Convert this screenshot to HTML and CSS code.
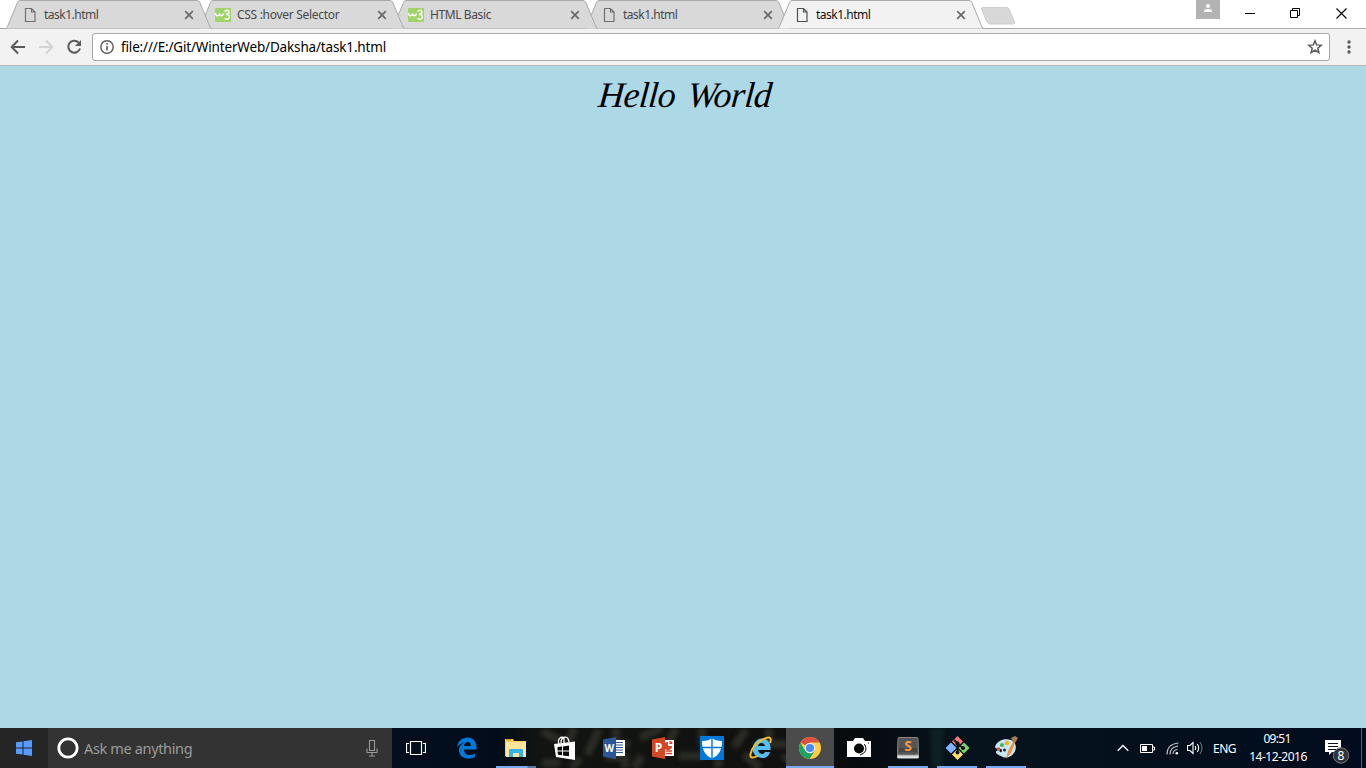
FILE: index.html
```html
<!DOCTYPE html>
<html lang="en">
<head>
<meta charset="utf-8">
<title>task1.html</title>
<link rel="stylesheet" href="styles.css">
</head>
<body>
<svg class="defs" width="0" height="0">
  <symbol id="tab" viewBox="0 0 206 29"><path d="M0 28.5 Q1 28 1.500 26.500 L11.500 2.500 Q12.300 .5 14 .5 H191 Q193 .5 193.800 2.500 L204 27 Q204.700 28.5 206 28.5"/></symbol>
  <symbol id="file" viewBox="0 0 16 16"><path d="M3.500 1.500h6l3.500 3.500v9.500h-9.500zM9.500 1.500v3.500h3.500" fill="none" stroke="currentColor" stroke-width="1.200"/></symbol>
  <symbol id="close" viewBox="0 0 10 10"><path d="M1.200 1.200l7.600 7.600M8.800 1.200l-7.600 7.600" fill="none" stroke="#696969" stroke-width="1.700"/></symbol>
  <symbol id="w3" viewBox="0 0 16 16"><rect y="1" width="16" height="14" rx="1" fill="#a0d468"/><path d="M.5 6Q.8 9 2.500 8.800T4.800 6.500Q5 9 6.500 8.800T8.500 6.500M9.500 4.500Q13.500 1.800 14 5Q14 7 11 7.200Q14.800 7.500 14.200 10.500Q13 13.500 9.500 11.500" fill="none" stroke="#fff" stroke-width="1.400"/></symbol>
</svg>
<div class="window">
  <header class="tabstrip">
    <div class="tab t1"><svg class="shape"><use href="#tab"/></svg><svg class="fav"><use href="#file"/></svg><span class="title w-task">task1.html</span><svg class="x"><use href="#close"/></svg></div>
    <div class="tab t2"><svg class="shape"><use href="#tab"/></svg><svg class="fav"><use href="#w3"/></svg><span class="title w-css">CSS :hover Selector</span><svg class="x"><use href="#close"/></svg></div>
    <div class="tab t3"><svg class="shape"><use href="#tab"/></svg><svg class="fav"><use href="#w3"/></svg><span class="title w-basic">HTML Basic</span><svg class="x"><use href="#close"/></svg></div>
    <div class="tab t4"><svg class="shape"><use href="#tab"/></svg><svg class="fav"><use href="#file"/></svg><span class="title w-task">task1.html</span><svg class="x"><use href="#close"/></svg></div>
    <div class="tab active"><svg class="shape"><use href="#tab"/></svg><svg class="fav"><use href="#file"/></svg><span class="title w-task">task1.html</span><svg class="x"><use href="#close"/></svg></div>
    <svg class="newtab" width="36" height="20" viewBox="0 0 36 20"><path d="M1.500 2.500Q1 .5 3 .5H27Q28.500 .5 29 2L34.500 15Q35 17 33 17H10Q8 17 7 15z" fill="#d8d8d8" stroke="#cdcdcd"/></svg>
    <div class="controls">
      <svg class="user" width="24" height="19"><rect width="24" height="19" fill="#b3b3b3"/><circle cx="12" cy="6" r="2.100" fill="#fff"/><path d="M8 12V10.500Q8.500 9 12 9t4 1.500V12z" fill="#fff"/></svg>
      <svg width="10" height="10"><path d="M0 5.500h10" stroke="#000"/></svg>
      <svg width="11" height="11"><path d="M.5 2.500h7v7h-7zM2.500 2.500v-2h7v7h-2" fill="none" stroke="#000"/></svg>
      <svg width="11" height="11"><path d="M.5 .5l10 10M10.500 .5l-10 10" stroke="#000" stroke-width="1.100"/></svg>
    </div>
  </header>
  <div class="toolbar">
    <svg class="nav" width="16" height="16"><path d="M15 8H2M8 1.500L1.700 8L8 14.500" fill="none" stroke="#5a5a5a" stroke-width="2"/></svg>
    <svg class="nav" width="16" height="16"><path d="M1 8H14M8 1.500L14.300 8L8 14.500" fill="none" stroke="#d3d3d3" stroke-width="2"/></svg>
    <svg class="nav" width="16" height="16"><path d="M12.600 3.500A6 6 0 1 0 14 9.500" fill="none" stroke="#5a5a5a" stroke-width="2"/><path d="M15 1v6H9z" fill="#5a5a5a"/></svg>
    <div class="omnibox">
      <svg width="14" height="14"><circle cx="7" cy="7" r="6.200" fill="none" stroke="#5a5a5a" stroke-width="1.400"/><path d="M7 6v4.500M7 3v1.700" stroke="#5a5a5a" stroke-width="1.600"/></svg>
      <span class="url">file:///E:/Git/WinterWeb/Daksha/task1.html</span>
      <svg class="star" width="16" height="16"><path d="M8 1.800L9.700 5.900L14.200 6.300L10.800 9.200L11.900 13.600L8 11.200L4.100 13.600L5.200 9.200L1.800 6.300L6.300 5.900z" fill="none" stroke="#5a5a5a" stroke-width="1.500"/></svg>
    </div>
    <svg class="menu" width="4" height="14"><g fill="#5a5a5a"><circle cx="2" cy="2" r="1.700"/><circle cx="2" cy="7" r="1.700"/><circle cx="2" cy="12" r="1.700"/></g></svg>
  </div>
  <main class="page"><h1 class="hello">Hello World</h1></main>
  <footer class="taskbar">
    <svg class="wallpaper" width="974" height="40"><defs><linearGradient id="wg"><stop offset="0" stop-color="#030e20"/><stop offset=".11" stop-color="#030d1a"/><stop offset=".15" stop-color="#111411"/><stop offset=".4" stop-color="#111210"/><stop offset=".48" stop-color="#050a0e"/><stop offset=".58" stop-color="#07131c"/><stop offset="1" stop-color="#020c1e"/></linearGradient><filter id="soft"><feGaussianBlur stdDeviation="2"/></filter></defs><rect width="974" height="40" fill="url(#wg)"/><g filter="url(#soft)" fill="none" stroke="#46443a" stroke-width="8" opacity=".5"><path d="M150 3l18 10M182 0l-8 20M207 2l-12 25M224 0v16h14M248 10l22-10M284 0l-9 17M310 0v14h20M354 2l-12 17M377 0v16h18M150 35h18M188 30l-8 10M213 29h20v11M250 28l-8 12M287 28h25M326 30v10M352 26l16 14M390 30h17"/></g><path d="M538 0h14l-2 40h-10z" fill="#18302c" filter="url(#soft)" opacity=".5"/></svg>
    <div class="start"><svg width="16" height="16"><path d="M0 2.300L6.500 1.400V7.400H0zM7.500 1.200L16 0V7.400H7.500zM0 8.400H6.500V14.600L0 13.700zM7.500 8.400H16V16L7.500 14.800z" fill="#569cff"/></svg></div>
    <div class="search">
      <svg width="22" height="22"><circle cx="11" cy="11" r="9.200" fill="none" stroke="#fff" stroke-width="2.800"/></svg>
      <span class="ask">Ask me anything</span>
      <svg class="mic" width="12" height="17"><path d="M3.500 .5h5v10h-5zM1 8.500v4h10v-4M6 12.500v3.500M3 16h6" fill="none" stroke="#999" stroke-width="1.100"/></svg>
    </div>
    <nav class="apps">
      <div class="app view"><svg width="20" height="14"><path d="M4.500 .5h11v13h-11zM3 2.500H.5v9H3M17 2.500h2.500v9H17" fill="none" stroke="#fff" stroke-width="1.200"/></svg></div>
      <div class="app"><svg width="22" height="22" viewBox="0 0 22 22"><path d="M1 10C2 4 6 .5 11.500.5C17 .5 20.500 4.500 20.500 9.500V12.500H8C8 19 15 19 19 16.500V20C13 23 3 22 3 13C3 9 6 6.500 9 5.500C6 6 3 7.500 1 10zM8 9H15C15 3.500 8.500 4 8 9z" fill="#0078d7" fill-rule="evenodd"/></svg></div>
      <div class="app explorer"><svg width="22" height="20" viewBox="0 0 22 20"><path d="M0 1H8L9 3H21V18H0z" fill="#f8cf59"/><path d="M1 4H21V19H1z" fill="#ffe69a"/><path d="M1 1h5v1.500H1z" fill="#d99c28"/><path d="M4 19V12Q4 11 5 11H17Q18 11 18 12V19H14V15H8V19z" fill="#35b4e9"/></svg></div>
      <div class="app"><svg width="22" height="24" viewBox="0 0 22 24"><path d="M0 8L21 5.500V24L2 21z" fill="#fff"/><path d="M5 8C3 3 7 0 10 2L10 7M7 7C7 0 14-1 15 6" fill="none" stroke="#fff" stroke-width="1.300"/><path d="M3.500 11L8 10.500V14.500H3.500zM9 10.400L15 9.500V14.500H9zM3.500 15.500H8V19.300L4 18.800zM9 15.500H15V20.300L9 19.500z" fill="#080b0a"/></svg></div>
      <div class="app"><svg width="22" height="22" viewBox="0 0 22 22"><path d="M11 3H22V19H11z" fill="#fff"/><path d="M13 5.500h7M13 8h7M13 10.500h7M13 13h7M13 15.500h7" stroke="#2b579a"/><path d="M0 2.500L13 0V22L0 19.500z" fill="#2b579a"/><text x="6.300" y="15" text-anchor="middle" class="office word">W</text></svg></div>
      <div class="app"><svg width="22" height="22" viewBox="0 0 22 22"><path d="M11 3H22V19H11z" fill="#fff"/><path d="M14 14h6M14 16.500h6" stroke="#d24726" stroke-width="1.300"/><path d="M16 5a4 4 0 1 0 4 4h-4z" fill="#d24726"/><path d="M17.500 4q3 0 3 3h-3z" fill="#d24726"/><path d="M0 2.500L13 0V22L0 19.500z" fill="#d24726"/><text x="6.500" y="15.300" text-anchor="middle" class="office">P</text></svg></div>
      <div class="app"><svg width="24" height="24"><rect width="24" height="24" fill="#0078d7"/><path d="M12 2Q15 5 22 5Q22.500 18 12 22.500Q1.500 18 2 5Q9 5 12 2z" fill="#fff"/><path d="M12 2v21M2 11.500h20" stroke="#0078d7" stroke-width="1.400"/></svg></div>
      <div class="app"><svg width="24" height="24" viewBox="0 0 24 24"><path d="M13 2.500C19 2.500 22 7 21.500 14H9C10 19 15 19 16 16H21C19 22.500 14 23 9 21C4 19 3 14 4 10C6 5 9 2.500 13 2.500zM9 10H16C15 6 10 6 9 10z" fill="#54bdf1" fill-rule="evenodd"/><path d="M21 7C23 2 21 0 15 3C8 6 3 12 1.500 18C.5 23 5 22 9 19.500" fill="none" stroke="#f2bd29" stroke-width="2"/></svg></div>
      <div class="app chrome"><svg width="22" height="22" viewBox="0 0 22 22"><circle cx="11" cy="11" r="11" fill="#ffcd42"/><path d="M11 11L1.500 5.500A11 11 0 0 1 20.500 5.500H11z" fill="#dd5144"/><path d="M1.500 5.500A11 11 0 0 0 10.500 22L15.800 13.700L6.200 13.700z" fill="#1ca261"/><circle cx="11" cy="11" r="5.300" fill="#f4f4f4"/><circle cx="11" cy="11" r="4.100" fill="#4c8bf5"/></svg></div>
      <div class="app"><svg width="24" height="20"><path d="M0 3H6L8 0H16L18 3H24V19H0z" fill="#fff"/><circle cx="12" cy="10.500" r="5" fill="#050808"/><path d="M17.500 6Q22 14 13 17" fill="none" stroke="#050808"/><path d="M21 5h1" stroke="#050808"/></svg></div>
      <div class="app open"><svg width="22" height="22"><path d="M1 15L0 20Q0 21.500 2 21.500H20Q22 21.500 22 20L21 15z" fill="#ddd"/><path d="M2 .5H20Q21 .5 21 2.500L21.500 15.500Q21.500 18 20 18H2Q.5 18 .5 15.500L1 2.500Q1 .5 2 .5z" fill="#555" stroke="#888"/><path d="M2 11h18v4H2z" fill="#454545"/><text x="11" y="13.500" text-anchor="middle" class="sublime">S</text></svg></div>
      <div class="app open"><svg width="25" height="25" viewBox="0 0 25 25"><path d="M12.500 0L18 5.500L12.500 11L7 5.500z" fill="#f37878"/><path d="M6 6.500L11.500 12L6 17.500L.5 12z" fill="#80b3ff"/><path d="M19 6.500L24.500 12L19 17.500L13.500 12z" fill="#80d36b"/><path d="M12.500 13L18 18.500L12.500 24L7 18.500z" fill="#ffe069"/><path d="M9 4L12.500 7V17M12.500 8L18 12" fill="none" stroke="#111" stroke-width="2"/><g fill="#111"><circle cx="12.500" cy="7.500" r="2"/><circle cx="18" cy="12" r="2"/><circle cx="12.500" cy="16.500" r="2"/></g></svg></div>
      <div class="app open"><svg width="25" height="24" viewBox="0 0 25 24"><path d="M7 20C1 18 0 14 6 14C4 16 8 18 8 14C8 12 2 14 1 11C3 4 11 2 17 4C24 7 23 16 17 20Q11 23 7 20z" fill="#cbe7f3"/><circle cx="4.500" cy="13" r="1.800" fill="#e54d3e"/><circle cx="8" cy="9" r="2.100" fill="#43b64d"/><circle cx="13" cy="7" r="2.300" fill="#f5b21c"/><circle cx="10.500" cy="14" r="1.500" fill="#122538"/><path d="M12 23L14 15L19 6L21 7L17 17z" fill="#ed9340"/><path d="M19 6L17 2L21 0L24 2L21 7z" fill="#a97b50"/></svg></div>
    </nav>
    <div class="tray">
      <svg class="chev" width="12" height="8"><path d="M.7 6.800L6 1.500L11.300 6.800" fill="none" stroke="#fff" stroke-width="1.300"/></svg>
      <svg class="bat" width="15" height="9"><path d="M.5 .5h12v8H.5zM13 3h1.500v3H13" fill="none" stroke="#fff"/><path d="M2 2h5v5H2z" fill="#fff"/></svg>
      <svg class="wifi" width="13" height="13"><circle cx="10.800" cy="11.200" r="1.300" fill="#fff"/><path d="M7 12Q7 8 11.500 7.500M4 12.500Q4 5 12 4.200M1 12.500Q1 2 12.500 1" fill="none" stroke="#bbb" stroke-width="1.200"/></svg>
      <svg class="sound" width="16" height="14"><path d="M.5 4.500H3L6 1.500V12.500L3 9.500H.5zM8 5Q9.500 7 8 9M10.300 3Q13 7 10.300 11" fill="none" stroke="#fff" stroke-width="1.100"/><path d="M13 1Q17 7 13 13" fill="none" stroke="#777"/></svg>
      <span class="lang">ENG</span>
      <div class="clock"><span class="time">09:51</span><span class="date">14-12-2016</span></div>
      <svg class="note" width="25" height="25"><path d="M0 0H16V12H7L4 15V12H0z" fill="#fff"/><path d="M3 3.500h10M3 6.500h10M3 9.500h10" stroke="#08111d"/><circle cx="16" cy="15.500" r="7.700" fill="#303235" stroke="#777"/><text x="16" y="19.800" text-anchor="middle" class="count">8</text></svg>
      <div class="desk"></div>
    </div>
  </footer>
</div>
</body>
</html>
```
FILE: styles.css
```css
* { box-sizing: border-box; }
body { margin: 0; overflow: hidden; font-family: "Segoe UI", "Noto Sans", sans-serif; }
svg { display: block; flex: none; }
.defs { position: absolute; }
.window { width: 1366px; height: 768px; display: flex; flex-direction: column; }
.tabstrip { height: 29px; flex: none; display: flex; padding-left: 6px; background: #fff; border-bottom: 1px solid #aaa; isolation: isolate; }
.tab { position: relative; width: 193px; height: 29px; flex: none; display: flex; align-items: center; padding: 1px 5px 0 16px; color: #707070; }
.t1 { z-index: 5; } .t2 { z-index: 4; } .t3 { z-index: 3; } .t4 { z-index: 2; }
.active { z-index: 6; color: #505050; }
.shape { position: absolute; left: 0; top: 0; width: 206px; height: 29px; fill: #d9d9d9; stroke: #aaa; z-index: -1; }
.active .shape { fill: #f2f2f2; }
.fav { width: 16px; height: 16px; }
.title { margin-left: 6px; font-size: 12px; line-height: 16px; color: #484848; white-space: nowrap; }
.active .title { color: #111; }
.w-task { letter-spacing: -.5px; }
.w-css { letter-spacing: -.3px; }
.w-basic { letter-spacing: -.4px; }
.x { width: 10px; height: 10px; margin-left: auto; }
.newtab { margin: 7px 0 0 9px; }
.controls { flex: 1; display: flex; align-items: center; justify-content: flex-end; gap: 35px; padding-right: 19px; height: 26px; }
.user { align-self: flex-start; margin-right: -10px; }
.toolbar { height: 37px; flex: none; display: flex; align-items: center; padding: 0 16px 1px 10px; background: #f2f2f2; border-bottom: 1px solid #b6b4b6; }
.nav { margin-right: 12px; }
.omnibox { width: 1238px; flex: none; height: 28px; margin-left: -2px; padding: 0 6px 0 7px; display: flex; align-items: center; background: #fff; border: 1px solid #a6a6a6; border-radius: 3px; }
.url { margin-left: 7px; font-size: 13.5px; line-height: 18px; letter-spacing: -.16px; color: #000; white-space: nowrap; }
.star { margin-left: auto; }
.menu { margin-left: 17px; }
.page { flex: 1; min-height: 0; background: #add8e6; text-align: center; }
.hello { margin: 8px 0 0 4px; font: italic 400 36px/42px "Monotype Corsiva", "Liberation Serif", serif; letter-spacing: -.6px; word-spacing: 4px; transform: skewX(-5deg); color: #000; }
.taskbar { height: 40px; flex: none; display: flex; background: #030d1d; color: #fff; position: relative; isolation: isolate; }
.wallpaper { position: absolute; left: 392px; top: 0; z-index: -1; }
.start { width: 48px; display: flex; align-items: center; justify-content: center; background: #252525; }
.search { width: 344px; display: flex; align-items: center; padding: 0 14px 0 9px; background: #333; }
.ask { margin-left: 5px; font-size: 14.5px; letter-spacing: -.35px; line-height: 20px; color: #9b9b9b; white-space: nowrap; }
.mic { margin-left: auto; }
.apps { display: flex; gap: 1px; }
.app { width: 48px; height: 40px; display: flex; align-items: center; justify-content: center; border-bottom: 2px solid transparent; padding-top: 2px; }
.view { margin-right: 2px; }
.explorer { background: linear-gradient(90deg, transparent 4px, #76a9f5 4px 35px, #55799f 36px 44px, transparent 44px) bottom / 100% 2px no-repeat border-box; }
.chrome { background: #4b4b4b; border-color: #76a9f5; }
.open { background: linear-gradient(#76a9f5, #76a9f5) center bottom / 40px 2px no-repeat border-box; }
.office { font: bold 12px "Open Sans", sans-serif; fill: #fff; }
.word { font-size: 10px; }
.sublime { font: bold 14px "Open Sans", sans-serif; fill: #f79842; }
.tray { margin-left: auto; display: flex; align-items: center; height: 40px; }
.bat { margin-left: 11px; }
.wifi { margin-left: 11px; }
.sound { margin-left: 8px; }
.lang { width: 24px; margin-left: 10px; font-size: 12px; letter-spacing: -.5px; }
.clock { width: 60px; margin-left: 11px; margin-right: 1px; display: flex; flex-direction: column; align-items: center; font-size: 12px; line-height: 18px; white-space: nowrap; }
.time { letter-spacing: -.7px; margin-right: 2px; }
.date { letter-spacing: -.5px; }
.note { margin: 8px 0 0 16px; }
.count { font: 12px "Noto Sans", sans-serif; fill: #fff; }
.desk { width: 5px; height: 40px; margin-left: 11px; border-left: 1px solid #53606e; }
```
